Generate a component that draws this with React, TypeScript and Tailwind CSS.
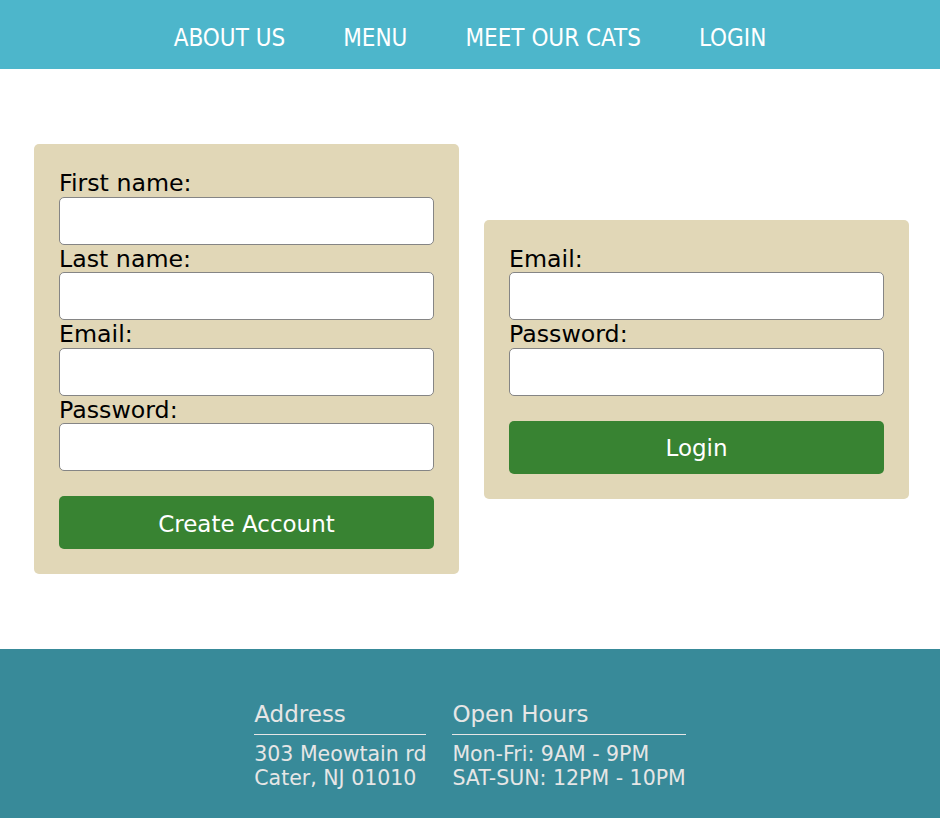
import React from "react";

const font = { fontFamily: '"DejaVu Sans", Verdana, sans-serif' };
const navFont = { fontFamily: '"DejaVu Sans Condensed", "DejaVu Sans", sans-serif' };

function Field({ label, type = "text" }: { label: string; type?: string }) {
	return (
		<div className="flex flex-col">
			<label className="pt-[2px] text-[23.7px] leading-[25.5px] text-black">{label}</label>
			<input
				type={type}
				className="h-[48px] w-full rounded-[5px] border border-[#858585] bg-white px-2 outline-none"
			/>
		</div>
	);
}

function Card({ fields, button }: { fields: { label: string; type?: string }[]; button: string }) {
	return (
		<form className="w-[425px] rounded-[5px] bg-[#e1d7b7] p-[25px]" onSubmit={(e) => e.preventDefault()}>
			{fields.map((f) => (
				<Field key={f.label} label={f.label} type={f.type} />
			))}
			<button
				type="submit"
				className="mt-[25px] flex h-[53px] w-full items-center justify-center rounded-[5px] bg-[#388332] pt-[3px] text-[23px] text-white"
			>
				{button}
			</button>
		</form>
	);
}

export default function App() {
	return (
		<div className="flex min-h-screen flex-col bg-white" style={font}>
			<header className="flex h-[69px] items-center justify-center gap-[58px] bg-[#4db6cb] pt-[7px] text-white">
				<a href="#" className="text-[24px] leading-none" style={navFont}>
					ABOUT US
				</a>
				<a href="#" className="text-[24px] leading-none" style={navFont}>
					MENU
				</a>
				<a href="#" className="text-[24px] leading-none" style={navFont}>
					MEET OUR CATS
				</a>
				<a href="#" className="text-[24px] leading-none" style={navFont}>
					LOGIN
				</a>
			</header>

			<main className="flex items-center gap-[25px] py-[75px] pl-[34px]">
				<Card
					fields={[
						{ label: "First name:" },
						{ label: "Last name:" },
						{ label: "Email:", type: "email" },
						{ label: "Password:", type: "password" },
					]}
					button="Create Account"
				/>
				<Card
					fields={[
						{ label: "Email:", type: "email" },
						{ label: "Password:", type: "password" },
					]}
					button="Login"
				/>
			</main>

			<footer className="flex flex-1 justify-center gap-[26px] bg-[#388a99] pt-[52px] pb-[28px] text-[#e6e6e6]">
				<div>
					<h3 className="border-b border-[#e6e6e6] pb-[6px] text-[23px] leading-[27px]">Address</h3>
					<p className="mt-[7px] text-[20.5px] leading-6">
						303 Meowtain rd
						<br />
						Cater, NJ 01010
					</p>
				</div>
				<div>
					<h3 className="border-b border-[#e6e6e6] pb-[6px] text-[23px] leading-[27px]">Open Hours</h3>
					<p className="mt-[7px] text-[20.5px] leading-6">
						Mon-Fri: 9AM - 9PM
						<br />
						SAT-SUN: 12PM - 10PM
					</p>
				</div>
			</footer>
		</div>
	);
}
